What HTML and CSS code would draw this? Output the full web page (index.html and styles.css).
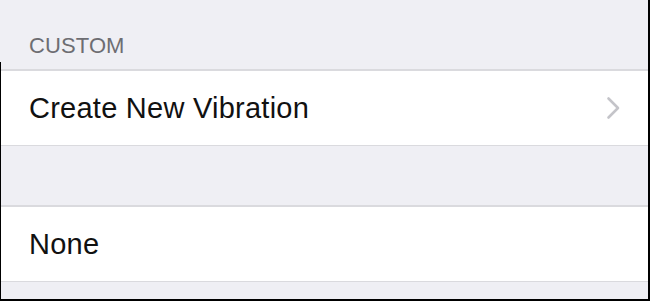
FILE: index.html
```html
<!DOCTYPE html>
<html>
<head>
<meta charset="utf-8">
<link rel="stylesheet" href="styles.css">
</head>
<body>
<div class="screen">
  <div class="content">
    <div class="section-header">CUSTOM</div>
    <div class="group">
      <div class="row">
        <span class="label">Create New Vibration</span>
        <svg class="chevron" width="15" height="24" viewBox="0 0 15 24">
          <path d="M2.5 2.5 L12 12 L2.5 21.5" fill="none" stroke="#c4c4c9" stroke-width="2.6" stroke-linecap="round" stroke-linejoin="round"/>
        </svg>
      </div>
    </div>
    <div class="spacer"></div>
    <div class="group">
      <div class="row">
        <span class="label">None</span>
      </div>
    </div>
    <div class="bottom"></div>
  </div>
</div>
</body>
</html>
```

FILE: styles.css
```css
html, body {
  margin: 0;
  padding: 0;
  background: #efeff4;
}
.screen {
  width: 648px;
  height: 299px;
  border-right: 2px solid #000;
  border-bottom: 2px solid #000;
  display: flex;
  flex-direction: column;
  font-family: "Liberation Sans", Arial, sans-serif;
  overflow: hidden;
}
.content {
  flex: 1;
  display: flex;
  flex-direction: column;
  position: relative;
}
.content::before {
  content: "";
  position: absolute;
  left: 0;
  top: 62px;
  bottom: 0;
  width: 1px;
  background: #000;
}
.section-header {
  height: 69px;
  box-sizing: border-box;
  padding: 35px 0 0 29px;
  font-size: 22px;
  line-height: 22px;
  color: #6d6d72;
  letter-spacing: 0.1px;
}
.group {
  background: #fff;
  border-top: 2px solid #dadade;
  border-bottom: 1px solid #dadade;
}
.row {
  height: 74px;
  display: flex;
  align-items: center;
  justify-content: space-between;
  padding: 0 27px 0 29px;
}
.label {
  font-size: 29px;
  letter-spacing: 0.25px;
  color: #111;
  padding-top: 1px;
}
.chevron {
  display: block;
}
.spacer {
  height: 59px;
}
.bottom {
  flex: 1;
}
```
